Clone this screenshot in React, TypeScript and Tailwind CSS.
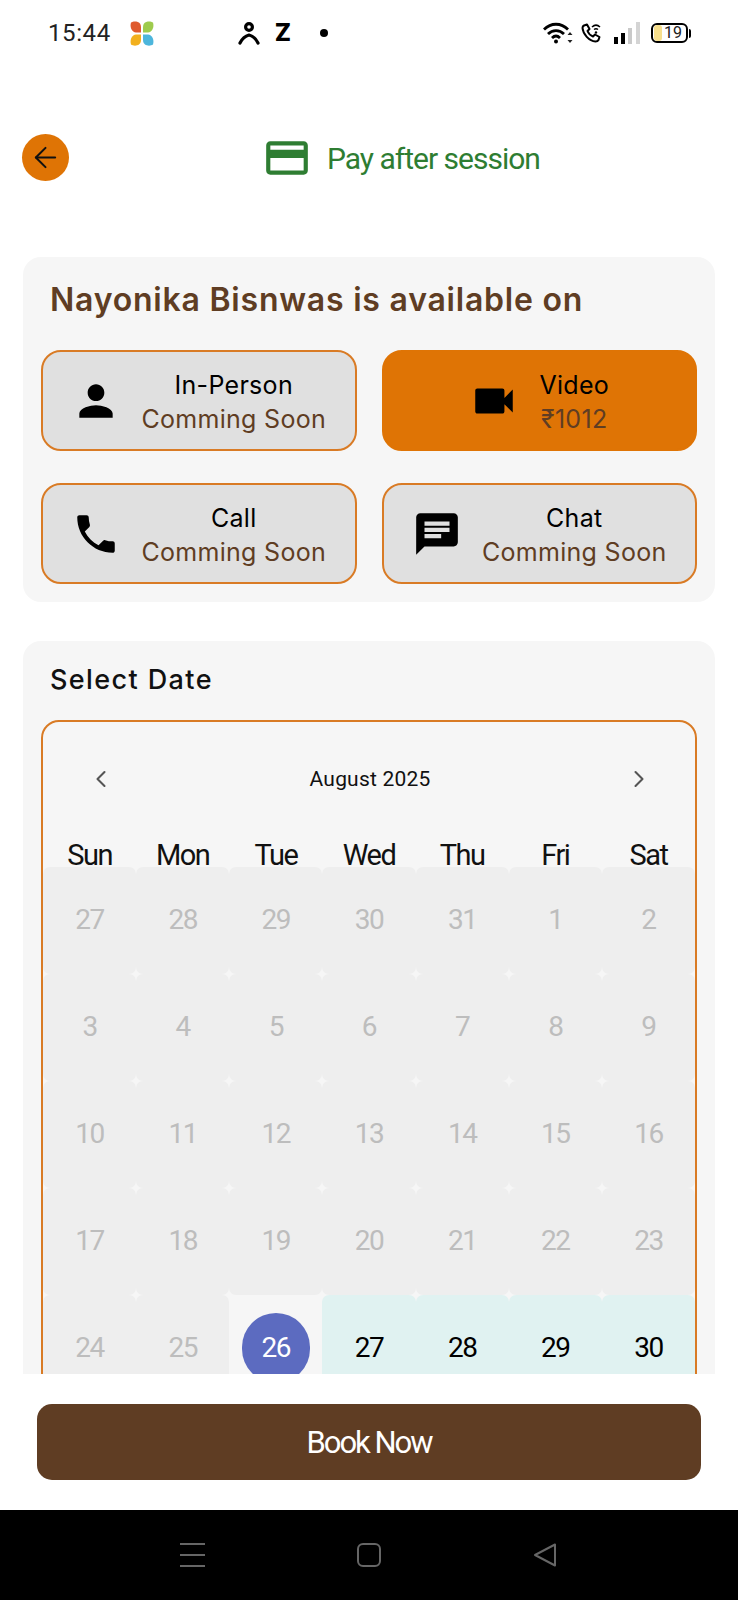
import { ArrowLeft, ChevronLeft, ChevronRight } from 'lucide-react';
import type { ReactNode } from 'react';
import { MdChat, MdCreditCard, MdPerson, MdPhone, MdVideocam } from 'react-icons/md';

const inter = 'font-["Inter",sans-serif]';
const roboto = 'font-["Roboto",sans-serif]';

const weekdays = ['Sun', 'Mon', 'Tue', 'Wed', 'Thu', 'Fri', 'Sat'];
const dates = [
  27, 28, 29, 30, 31, 1, 2, 3, 4, 5, 6, 7, 8, 9, 10, 11, 12, 13, 14, 15, 16, 17, 18, 19, 20, 21, 22, 23, 24, 25, 26, 27,
  28, 29, 30,
];
const SELECTED_INDEX = 30;

function Clover() {
  return (
    <svg width="26" height="25" viewBox="0 0 26 25" className="ml-[18px]">
      <path d="M2 1.500C4 0 8 0 10 1.500s2 3.500 2 6v4H7C3 11.500 .5 6 2 1.500z" fill="#df5a2e" />
      <path d="M24 1.500C22 0 18 0 16 1.500s-2 3.500-2 6v4h5c4 0 6.500-5.500 5-10z" fill="#9ecb4d" />
      <path d="M2 23.500c2 1.500 6 1.500 8 0s2-3.500 2-6v-4H7c-4 0-6.500 5.500-5 10z" fill="#f2b01e" />
      <path d="M24 23.500c-2 1.500-6 1.500-8 0s-2-3.500-2-6v-4h5c4 0 6.500 5.500 5 10z" fill="#4db6dc" />
    </svg>
  );
}

function StatusBar() {
  return (
    <div className="flex h-[66px] items-center pl-[48px]">
      <span className={`${roboto} text-[24px] leading-none tracking-[0.6px] text-[#222222]`}>15:44</span>
      <Clover />
      <svg width="22" height="23" viewBox="0 0 22 23" className="ml-[83px]" fill="none" stroke="#000000" strokeWidth="3.2">
        <circle cx="11" cy="5" r="3.400" />
        <path d="M2 21c2-4 5-7 9-8 4 1 7 4 9 8" strokeLinecap="round" strokeLinejoin="round" />
      </svg>
      <span className={`${inter} ml-[15px] text-[24px] leading-none font-extrabold text-black`}>Z</span>
      <span className="ml-[29px] h-2 w-2 rounded-full bg-black" />
      <svg width="30" height="22" viewBox="0 0 30 22" className="ml-[215px]" fill="none" stroke="#000000" strokeWidth="2.800">
        <path d="M1 7.500c7-7 17-7 24 0" />
        <path d="M5 12c4.500-4.500 11.500-4.500 16 0" />
        <path d="M9 16c2.500-2.500 5.500-2.500 8 0" />
        <circle cx="13" cy="19.500" r="2" fill="#000000" stroke="none" />
        <path d="M27 10l2.500 3h-5zM27 21l2.500-3h-5z" fill="#222222" stroke="none" />
      </svg>
      <svg width="21" height="20" viewBox="0 0 21 20" className="ml-[8px]" fill="none" stroke="#000000">
        <path
          d="M3 2.500l3-1 2.500 4.500-2 2c1 2.500 3 4.500 5.500 5.500l2-2 4.500 2.500-1 3c-.5 1-2 1.500-3 1.500C8 18 2 11 1.500 5c0-1 .5-2 1.500-2.500z"
          strokeWidth="2"
          strokeLinejoin="round"
        />
        <path d="M11 4c2.500-2.500 5.500-2.500 8 0M13 6.500c1.500-1.200 2.500-1.200 4 0" strokeWidth="1.500" />
        <circle cx="15" cy="9.500" r="1.200" fill="#000000" stroke="none" />
      </svg>
      <svg width="26" height="22" viewBox="0 0 26 22" className="ml-[12px]">
        <rect x="0" y="15" width="4" height="7" fill="#000000" />
        <rect x="7" y="11" width="4" height="11" fill="#000000" />
        <rect x="14" y="6" width="4" height="16" fill="#c9c9c9" />
        <rect x="22" y="0" width="4" height="22" fill="#d4d4d4" />
      </svg>
      <div className="ml-[11px] flex items-center">
        <div className="flex h-[20px] w-[37px] items-center overflow-hidden rounded-[6px] border-2 border-black">
          <span className="ml-[1px] h-full w-[8px] rounded-[3px] bg-[#f7df8c]" />
          <span className={`${roboto} ml-[2px] text-[16px] leading-none text-[#222222]`}>19</span>
        </div>
        <span className="ml-[1px] h-[9px] w-[2px] rounded-r-sm bg-black" />
      </div>
    </div>
  );
}

function Header() {
  return (
    <div className="mt-[68px] flex h-[47px] items-center pl-[22px]">
      <button className="flex h-[47px] w-[47px] items-center justify-center rounded-full bg-[#df7405]">
        <ArrowLeft size={33} strokeWidth={1.5} color="#111111" />
      </button>
      <MdCreditCard size={50} color="#2e7d32" className="ml-[193px]" />
      <span className={`${roboto} ml-[15px] pt-[2px] text-[30px] leading-none tracking-[-1px] text-[#2e7d32]`}>
        Pay after session
      </span>
    </div>
  );
}

interface ModeButtonProps {
  icon: ReactNode;
  title: string;
  note: string;
  active?: boolean;
}

function ModeButton({ icon, title, note, active }: ModeButtonProps) {
  return (
    <div
      className={`flex h-[101px] items-center justify-center gap-5 rounded-[20px] border-2 ${
        active ? 'border-[#df7405] bg-[#df7405]' : 'border-[#d97b25] bg-[#e0e0e0]'
      }`}
    >
      {icon}
      <div className={`${inter} pt-[3px] text-center text-[25px] tracking-[0.3px]`}>
        <div className="leading-[34px] text-black">{title}</div>
        <div className="leading-[34px] text-[#5f3d23]">{note}</div>
      </div>
    </div>
  );
}

function Availability() {
  return (
    <div className="mx-[23px] mt-[76px] rounded-[18px] bg-[#f6f6f6] px-[18px] pt-[21px] pb-[18px]">
      <h2 className={`${inter} pl-[9px] text-[32px] leading-[44px] font-semibold tracking-[0.78px] text-[#5f3d23]`}>
        Nayonika Bisnwas is available on
      </h2>
      <div className="mt-[28px] grid grid-cols-2 gap-x-[25px] gap-y-[32px]">
        <ModeButton icon={<MdPerson size={50} color="#000000" />} title="In-Person" note="Comming Soon" />
        <ModeButton icon={<MdVideocam size={50} color="#000000" />} title="Video" note="₹1012" active />
        <ModeButton icon={<MdPhone size={50} color="#000000" />} title="Call" note="Comming Soon" />
        <ModeButton icon={<MdChat size={50} color="#000000" />} title="Chat" note="Comming Soon" />
      </div>
    </div>
  );
}

function cellClass(index: number) {
  if (index === SELECTED_INDEX) return 'text-white';
  if (index > SELECTED_INDEX) return 'bg-[#e0f2f1] text-black';
  return 'bg-[#eeeeee] text-[#bdbdbd]';
}

function Calendar() {
  return (
    <div className="mt-[20px] rounded-[18px] border-2 border-[#d97b25]">
      <div className="flex h-[113px] items-center justify-between pr-[42px] pl-[44px]">
        <ChevronLeft size={28} strokeWidth={1.8} color="#555555" />
        <span className={`${roboto} pt-[1px] text-[21px] leading-none tracking-[0.2px] text-[#111111]`}>August 2025</span>
        <ChevronRight size={28} strokeWidth={1.8} color="#555555" />
      </div>
      <div className="grid grid-cols-7">
        {weekdays.map((day) => (
          <div
            key={day}
            className={`${roboto} flex h-[32px] items-start justify-center text-[29px] leading-[40px] tracking-[-1.5px] text-[#111111]`}
          >
            {day}
          </div>
        ))}
        {dates.map((date, index) => (
          <div
            key={index}
            className={`${roboto} flex h-[107px] items-center justify-center rounded-[7px] pb-[2px] text-[28px] tracking-[-1.5px] ${cellClass(index)}`}
          >
            {index === SELECTED_INDEX ? (
              <span className="flex h-[70px] w-[68px] items-center justify-center rounded-full bg-[#5c6bc0]">{date}</span>
            ) : (
              date
            )}
          </div>
        ))}
      </div>
    </div>
  );
}

function DateSection() {
  return (
    <div className="mx-[23px] mt-[39px] rounded-[18px] bg-[#f6f6f6] px-[18px] pt-[19px]">
      <h2 className={`${inter} pl-[9px] text-[27px] leading-[40px] font-medium tracking-[1.4px] text-[#111111]`}>
        Select Date
      </h2>
      <Calendar />
    </div>
  );
}

function NavBar() {
  return (
    <div className="flex h-[90px] items-center justify-center gap-[152px] bg-black pr-[2px]">
      <div className="flex h-[24px] w-[25px] flex-col justify-between">
        <span className="h-[2px] bg-[#666666]" />
        <span className="h-[2px] bg-[#666666]" />
        <span className="h-[2px] bg-[#666666]" />
      </div>
      <span className="h-[24px] w-[24px] rounded-[6px] border-2 border-[#666666]" />
      <svg width="24" height="24" viewBox="0 0 24 24" fill="none" stroke="#666666" strokeWidth="2" strokeLinejoin="round">
        <path d="M22 1.500v21L2 12z" />
      </svg>
    </div>
  );
}

export default function App() {
  return (
    <div className="flex h-[1600px] w-[738px] flex-col overflow-hidden bg-white">
      <div className="h-[1374px] overflow-hidden">
        <StatusBar />
        <Header />
        <Availability />
        <DateSection />
      </div>
      <div className="flex flex-1 items-center px-[37px]">
        <button
          className={`${roboto} flex h-[76px] w-full items-center justify-center rounded-[15px] bg-[#5f3d23] pt-[2px] text-[31px] tracking-[-2px] text-white`}
        >
          Book Now
        </button>
      </div>
      <NavBar />
    </div>
  );
}
